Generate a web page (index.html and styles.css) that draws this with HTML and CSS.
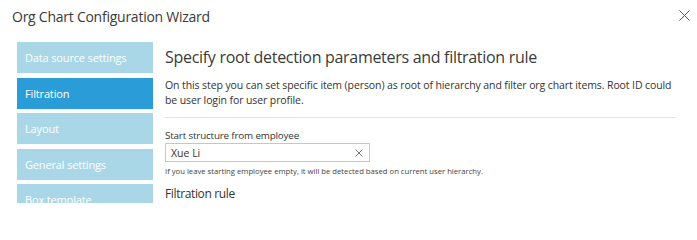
FILE: index.html
```html
<!DOCTYPE html>
<html>
<head>
<meta charset="utf-8">
<link rel="stylesheet" href="styles.css">
</head>
<body>
<div class="dialog">
  <div class="header">
    <div class="title">Org Chart Configuration Wizard</div>
    <div class="close" aria-label="Close">
      <svg width="11" height="11" viewBox="0 0 11 11"><path d="M0.5 0.5 L10.5 10.5 M10.5 0.5 L0.5 10.5" stroke="#555" stroke-width="1" fill="none"/></svg>
    </div>
  </div>
  <div class="main">
    <div class="nav">
      <div class="nav-item">Data source settings</div>
      <div class="nav-item active">Filtration</div>
      <div class="nav-item">Layout</div>
      <div class="nav-item">General settings</div>
      <div class="nav-item">Box template</div>
    </div>
    <div class="content">
      <h1 class="heading">Specify root detection parameters and filtration rule</h1>
      <p class="intro">On this step you can set specific item (person) as root of hierarchy and filter org chart items. Root ID could be user login for user profile.</p>
      <div class="sep"></div>
      <div class="label">Start structure from employee</div>
      <div class="input">
        <span class="value">Xue Li</span>
        <svg class="clear" width="8" height="8" viewBox="0 0 8 8"><path d="M0.5 0.5 L7.5 7.5 M7.5 0.5 L0.5 7.5" stroke="#777" stroke-width="1" fill="none"/></svg>
      </div>
      <div class="help">If you leave starting employee empty, it will be detected based on current user hierarchy.</div>
      <div class="section">Filtration rule</div>
    </div>
  </div>
</div>
</body>
</html>
```

FILE: styles.css
```css
html, body {
  margin: 0;
  padding: 0;
  background: #ffffff;
  height: 203px;
  overflow: hidden;
}
.dialog {
  font-family: "Open Sans", "Noto Sans", sans-serif;
  color: #333333;
}
.header {
  display: flex;
  justify-content: space-between;
  align-items: center;
  height: 30px;
  padding: 0 7px 0 12px;
}
.title {
  font-size: 14px;
  letter-spacing: -0.25px;
  color: #3a3a3a;
  padding-top: 2px;
}
.close {
  display: flex;
  width: 11px;
  height: 11px;
}
.main {
  display: flex;
  padding: 12px 0 0 17px;
}
.nav {
  display: flex;
  flex-direction: column;
  gap: 4.5px;
  width: 136px;
  flex: none;
}
.nav-item {
  height: 31px;
  line-height: 31px;
  padding-left: 8px;
  background: #a9d7e7;
  color: #ffffff;
  font-size: 11px;
  letter-spacing: -0.15px;
}
.nav-item.active {
  background: #2a9dd8;
}
.content {
  margin-left: 12px;
  flex: 1;
  padding-right: 12px;
}
.heading {
  margin: 4px 0 0 0;
  font-size: 16px;
  letter-spacing: -0.3px;
  font-weight: 400;
  line-height: 22px;
  color: #3a3a3a;
}
.intro {
  margin: 10px 0 0 0;
  font-size: 10.5px;
  letter-spacing: -0.1px;
  line-height: 15px;
}
.sep {
  height: 1px;
  background: #e1e1e1;
  margin: 9px 10px 0 0;
}
.label {
  margin-top: 10px;
  font-size: 9.8px;
  letter-spacing: -0.15px;
  line-height: 15px;
}
.input {
  box-sizing: border-box;
  width: 205px;
  height: 19px;
  margin-top: 0;
  border: 1px solid #c6c6c6;
  display: flex;
  align-items: center;
  justify-content: space-between;
  padding: 0 6px 0 5px;
}
.value {
  font-size: 10.5px;
}
.help {
  margin-top: 4px;
  font-size: 7.7px;
  line-height: 11px;
  color: #444444;
}
.section {
  margin-top: 8px;
  font-size: 12px;
  letter-spacing: -0.35px;
  line-height: 18px;
}
```
